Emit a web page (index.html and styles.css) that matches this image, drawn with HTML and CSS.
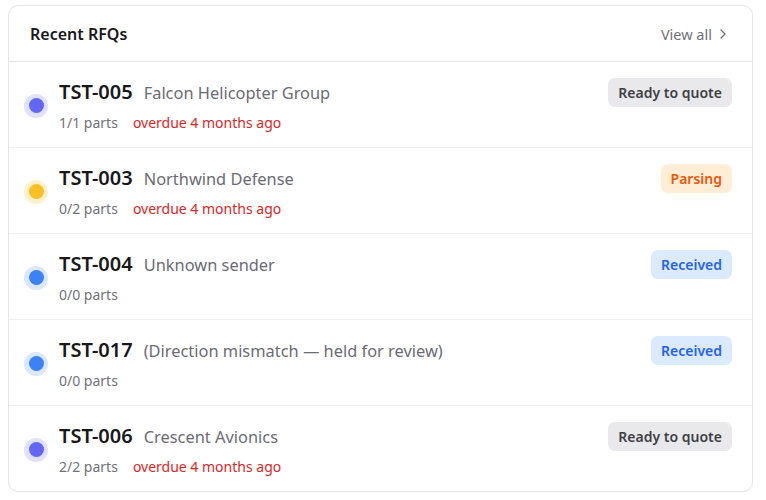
FILE: index.html
```html
<!DOCTYPE html>
<html lang="en">
<head>
<meta charset="utf-8">
<title>Recent RFQs</title>
<link rel="stylesheet" href="styles.css">
</head>
<body>
<div class="page">
  <section class="card">
    <header class="card-head">
      <h2 class="card-title">Recent RFQs</h2>
      <a class="view-all" href="#">View all
        <svg class="chev" width="12" height="12" viewBox="0 0 12 12" aria-hidden="true"><path d="M4 2 L8 6 L4 10" fill="none" stroke="currentColor" stroke-width="1.3" stroke-linecap="round" stroke-linejoin="round"/></svg>
      </a>
    </header>
    <ul class="rows">
      <li class="row">
        <span class="dot dot-indigo"><span></span></span>
        <div class="info">
          <div class="line1"><span class="code">TST-005</span><span class="company">Falcon Helicopter Group</span></div>
          <div class="line2"><span class="parts">1/1 parts</span><span class="overdue">overdue 4 months ago</span></div>
        </div>
        <span class="badge badge-gray">Ready to quote</span>
      </li>
      <li class="row">
        <span class="dot dot-amber"><span></span></span>
        <div class="info">
          <div class="line1"><span class="code">TST-003</span><span class="company">Northwind Defense</span></div>
          <div class="line2"><span class="parts">0/2 parts</span><span class="overdue">overdue 4 months ago</span></div>
        </div>
        <span class="badge badge-orange">Parsing</span>
      </li>
      <li class="row">
        <span class="dot dot-blue"><span></span></span>
        <div class="info">
          <div class="line1"><span class="code">TST-004</span><span class="company">Unknown sender</span></div>
          <div class="line2"><span class="parts">0/0 parts</span></div>
        </div>
        <span class="badge badge-blue">Received</span>
      </li>
      <li class="row">
        <span class="dot dot-blue"><span></span></span>
        <div class="info">
          <div class="line1"><span class="code">TST-017</span><span class="company">(Direction mismatch — held for review)</span></div>
          <div class="line2"><span class="parts">0/0 parts</span></div>
        </div>
        <span class="badge badge-blue">Received</span>
      </li>
      <li class="row">
        <span class="dot dot-indigo"><span></span></span>
        <div class="info">
          <div class="line1"><span class="code">TST-006</span><span class="company">Crescent Avionics</span></div>
          <div class="line2"><span class="parts">2/2 parts</span><span class="overdue">overdue 4 months ago</span></div>
        </div>
        <span class="badge badge-gray">Ready to quote</span>
      </li>
    </ul>
  </section>
</div>
</body>
</html>
```
FILE: styles.css
```css
* { box-sizing: border-box; }
html, body { margin: 0; padding: 0; background: #ffffff; }
body {
  font-family: "Noto Sans", "Open Sans", "Liberation Sans", sans-serif;
  color: #18181b;
}
.page { padding: 5px 13px 8px 8px; }
.card {
  border: 1px solid #e4e4e7;
  border-radius: 10px;
  background: #fff;
  overflow: hidden;
}
.card-head {
  height: 56px;
  display: flex;
  align-items: center;
  justify-content: space-between;
  padding: 0 23px 0 21px;
  border-bottom: 1px solid #e4e4e7;
}
.card-title {
  margin: 0;
  font-size: 16px;
  font-weight: 600;
  color: #18181b;
}
.view-all {
  display: flex;
  align-items: center;
  gap: 5px;
  font-size: 14.5px;
  color: #71717a;
  text-decoration: none;
}
.chev { display: block; }
.rows { list-style: none; margin: 0; padding: 0; }
.row {
  display: flex;
  align-items: center;
  gap: 11px;
  padding: 16px 20px 14px 15px;
  border-bottom: 1px solid #f0f0f1;
}
.row:last-child { border-bottom: none; }
.dot {
  flex: none;
  width: 24px;
  height: 24px;
  border-radius: 50%;
  display: flex;
  align-items: center;
  justify-content: center;
}
.dot span { width: 15px; height: 15px; border-radius: 50%; }
.dot-indigo { background: #e0e1fc; }
.dot-indigo span { background: #6366f1; }
.dot-amber { background: #fef0cc; }
.dot-amber span { background: #fbbf24; }
.dot-blue { background: #dbe7fd; }
.dot-blue span { background: #3b82f6; }
.info { flex: 1; min-width: 0; }
.line1 {
  display: flex;
  align-items: baseline;
  gap: 11px;
  height: 28px;
  line-height: 28px;
}
.code { font-size: 20px; font-weight: 600; color: #18181b; }
.company { font-size: 16.4px; color: #6b6b74; }
.line2 {
  display: flex;
  gap: 15px;
  margin-top: 7px;
  line-height: 20px;
  font-size: 14px;
}
.parts { color: #71717a; }
.overdue { color: #dc2626; }
.badge {
  flex: none;
  align-self: flex-start;
  font-size: 14px;
  font-weight: 600;
  line-height: 21px;
  padding: 4px 10px;
  border-radius: 7px;
}
.badge-gray { background: #e9e9eb; color: #3f3f46; }
.badge-orange { background: #ffedd5; color: #ea580c; }
.badge-blue { background: #dbeafe; color: #2563eb; }
```
